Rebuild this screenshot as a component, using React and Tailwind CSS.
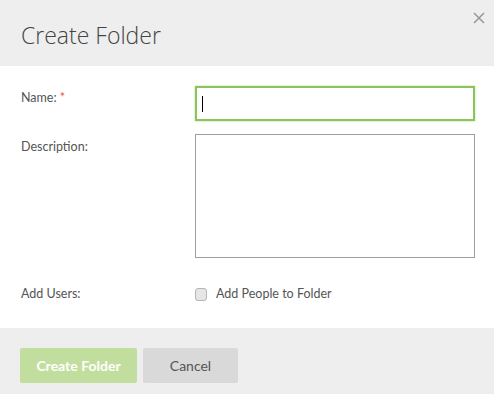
import React from "react";

export default function App() {
  return (
    <div className="w-[494px] h-[394px] overflow-hidden bg-white font-['Lato','Open_Sans',sans-serif] text-[#555]">
      {/* header */}
      <div className="relative h-[66px] bg-[#eeeeee] px-[21px] pt-[20px]">
        <h1 className="font-['Open_Sans',sans-serif] font-light text-[23px] leading-[30px] text-[#444]">
          Create Folder
        </h1>
        <button className="absolute right-[6px] top-[9px] w-[18px] h-[18px] flex items-center justify-center text-[#9a9a9a]">
          <svg width="12" height="12" viewBox="0 0 12 12" stroke="currentColor" strokeWidth="1.6">
            <path d="M1 1 L11 11 M11 1 L1 11" />
          </svg>
        </button>
      </div>

      {/* body */}
      <div className="h-[262px] pl-[20px] pr-[19px] pt-[20px] text-[12.5px]">
        <div className="flex">
          <label className="w-[175px] shrink-0 pt-[4px] pl-[1px] leading-[16px]">
            Name: <span className="text-[#e5534b]">*</span>
          </label>
          <div className="w-[280px] shrink-0 h-[35px] border-2 border-[#8cc35c] shadow-[0_0_2px_#b5db92] flex items-center pl-[5px]">
            <div className="w-[1px] h-[16px] bg-black" />
          </div>
        </div>

        <div className="flex mt-[13px]">
          <label className="w-[175px] shrink-0 pt-[5px] pl-[1px] leading-[16px]">Description:</label>
          <div className="w-[280px] shrink-0 h-[124px] border border-[#9e9e9e]" />
        </div>

        <div className="flex items-center mt-[28px]">
          <label className="w-[175px] shrink-0 pl-[1px] leading-[16px]">Add Users:</label>
          <div className="w-[12px] h-[13px] rounded-[3px] border border-[#b5b5b5] bg-[#e6e6e6]" />
          <span className="ml-[9px] leading-[16px]">Add People to Folder</span>
        </div>
      </div>

      {/* footer */}
      <div className="h-[66px] bg-[#eeeeee] px-[20px] pt-[20px] flex gap-[6px]">
        <button className="w-[117px] h-[35px] rounded-[2px] bg-[#c2de9e] text-white font-bold text-[14px]">
          Create Folder
        </button>
        <button className="w-[95px] h-[35px] rounded-[2px] bg-[#d9d9d9] text-[#555] text-[14px]">
          Cancel
        </button>
      </div>
    </div>
  );
}
